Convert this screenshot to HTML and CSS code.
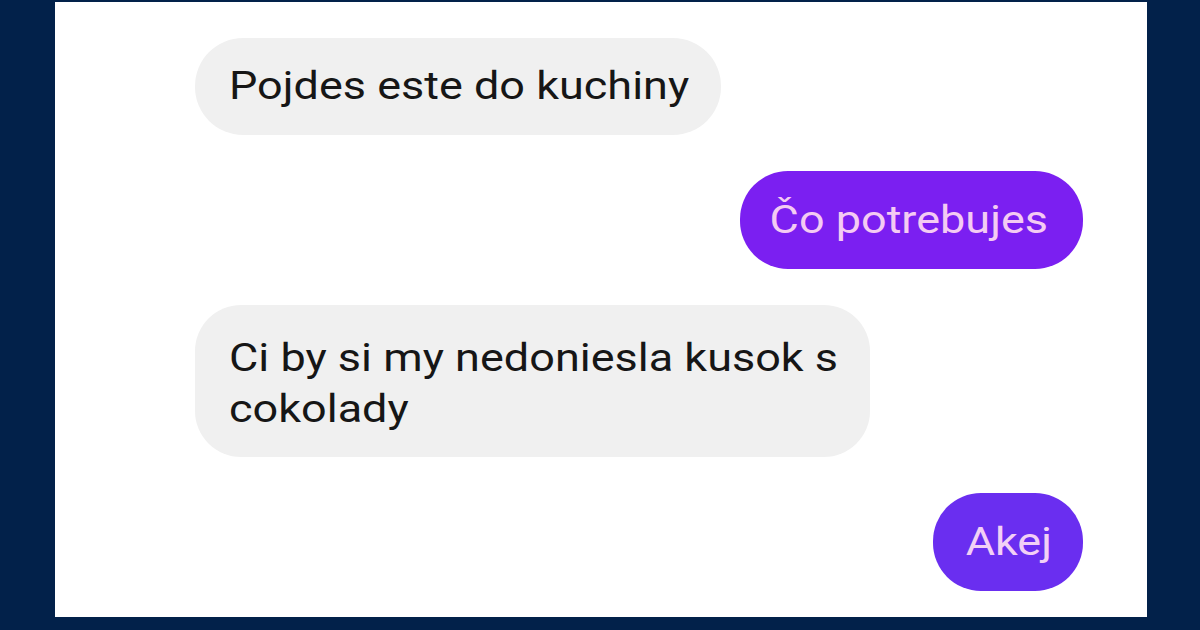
FILE: index.html
```html
<!DOCTYPE html>
<html lang="sk">
<head>
<meta charset="utf-8">
<link rel="stylesheet" href="styles.css">
</head>
<body>
<div class="panel">
  <div class="row in"><div class="bubble gray"><span class="t">Pojdes este do kuchiny</span></div></div>
  <div class="row out"><div class="bubble purple"><span class="t">Čo potrebujes</span></div></div>
  <div class="row in"><div class="bubble gray multi"><span class="t">Ci by si my nedoniesla kusok s</span><span class="t">cokolady</span></div></div>
  <div class="row out"><div class="bubble purple blue"><span class="t">Akej</span></div></div>
</div>
</body>
</html>
```
FILE: styles.css
```css
html, body { margin: 0; padding: 0; }
body {
  width: 1200px;
  height: 630px;
  background: #02214a;
  overflow: hidden;
}
.panel {
  box-sizing: border-box;
  margin: 2px 0 0 55px;
  width: 1092px;
  height: 615px;
  background: #ffffff;
  display: flex;
  flex-direction: column;
  padding: 36px 64px 0 140px;
  font-family: Roboto, "Noto Sans", sans-serif;
}
.row { display: flex; }
.row.in { justify-content: flex-start; }
.row.out { justify-content: flex-end; }
.row + .row { margin-top: 36px; }
.bubble {
  font-size: 45px;
  line-height: 55px;
  padding: 20px 32px 22px 34px;
  border-radius: 48px;
}
.t {
  display: block;
  white-space: nowrap;
  transform: scaleY(0.85);
  transform-origin: 50% 50%;
}
.gray { background: #f0f0f0; color: #161616; }
.multi { line-height: 51px; padding: 27px 32px 23px 34px; border-radius: 46px; }
.purple { background: #7b1ff1; color: #f4cbf3; padding: 21px 35px 22px 30px; }
.blue { background: #6a2ef0; color: #f2d0f6; padding: 21px 31px 22px 33px; }
```
